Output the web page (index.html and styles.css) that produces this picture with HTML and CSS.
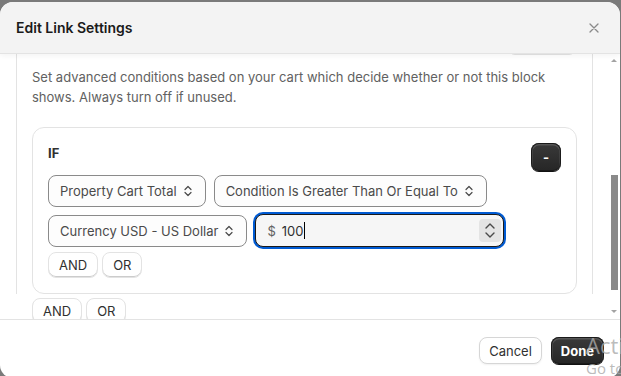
FILE: index.html
```html
<!DOCTYPE html>
<html lang="en">
<head>
  <meta charset="UTF-8">
  <title>Edit Link Settings</title>
  <link rel="stylesheet" href="styles.css">
</head>
<body>
  <div class="modal">
    <div class="modal-header">
      <h2>Edit Link Settings</h2>
      <button class="close-btn" aria-label="Close">
        <svg width="10" height="10" viewBox="0 0 10 10"><path d="M1 1l8 8M9 1l-8 8" stroke="#8a8a8a" stroke-width="1.3" stroke-linecap="round"/></svg>
      </button>
    </div>

    <div class="modal-body">
      <div class="scroll-area">
        <div class="section">
          <div class="toggle-row"><button class="btn toggle-btn"></button></div>
          <p class="help">Set advanced conditions based on your cart which decide whether or not this block shows. Always turn off if unused.</p>

          <div class="rule-card">
            <div class="rule-head">
              <span class="rule-title">IF</span>
              <button class="btn-dark remove-btn">-</button>
            </div>
            <div class="rule-row">
              <div class="select">Property Cart Total
                <svg width="8" height="12" viewBox="0 0 8 12"><path d="M1 4.5l3-3 3 3M1 7.5l3 3 3-3" fill="none" stroke="#4a4a4a" stroke-width="1.2" stroke-linecap="round" stroke-linejoin="round"/></svg>
              </div>
              <div class="select">Condition Is Greater Than Or Equal To
                <svg width="8" height="12" viewBox="0 0 8 12"><path d="M1 4.5l3-3 3 3M1 7.5l3 3 3-3" fill="none" stroke="#4a4a4a" stroke-width="1.2" stroke-linecap="round" stroke-linejoin="round"/></svg>
              </div>
            </div>
            <div class="rule-row">
              <div class="select">Currency USD - US Dollar
                <svg width="8" height="12" viewBox="0 0 8 12"><path d="M1 4.5l3-3 3 3M1 7.5l3 3 3-3" fill="none" stroke="#4a4a4a" stroke-width="1.2" stroke-linecap="round" stroke-linejoin="round"/></svg>
              </div>
              <div class="amount-input">
                <span class="prefix">$</span>
                <span class="value">100</span><span class="caret"></span>
                <span class="spin">
                  <svg width="12" height="8" viewBox="0 0 12 8"><path d="M2 6l4-4 4 4" fill="none" stroke="#4a4a4a" stroke-width="1.4" stroke-linecap="round" stroke-linejoin="round"/></svg>
                  <svg width="12" height="8" viewBox="0 0 12 8"><path d="M2 2l4 4 4-4" fill="none" stroke="#4a4a4a" stroke-width="1.4" stroke-linecap="round" stroke-linejoin="round"/></svg>
                </span>
              </div>
            </div>
            <div class="logic-row">
              <button class="btn">AND</button>
              <button class="btn">OR</button>
            </div>
          </div>

          <div class="logic-row outer">
            <button class="btn">AND</button>
            <button class="btn">OR</button>
          </div>
        </div>
      </div>
      <div class="scrollbar">
        <span class="arrow-up"></span>
        <span class="thumb"></span>
        <span class="arrow-down"></span>
      </div>
    </div>

    <div class="modal-footer">
      <button class="btn">Cancel</button>
      <button class="btn-dark done-btn">Done</button>
    </div>
  </div>

  <div class="watermark">
    <div class="wm-title">Activate Windows</div>
    <div class="wm-sub">Go to Settings to activate Windows.</div>
  </div>
</body>
</html>
```

FILE: styles.css
```css
html, body {
  margin: 0;
  height: 376px;
  overflow: hidden;
}
body {
  background: #7a7a7a;
  font-family: Inter, "Noto Sans", sans-serif;
  font-size: 13px;
  color: #303030;
}
button {
  font-family: inherit;
}
.modal {
  margin-top: 2px;
  width: 620px;
  height: 376px;
  background: #fff;
  border-radius: 13px;
  overflow: hidden;
  display: flex;
  flex-direction: column;
}
.modal-header {
  height: 51px;
  flex: none;
  background: #f3f3f3;
  border-bottom: 1px solid #e3e3e3;
  padding: 0 16px;
  display: flex;
  align-items: center;
  justify-content: space-between;
  box-shadow: 0 2px 6px rgba(0, 0, 0, 0.05);
  position: relative;
  z-index: 1;
}
.modal-header h2 {
  margin: 0;
  font-size: 14px;
  font-weight: 600;
  color: #1a1a1a;
}
.close-btn {
  width: 20px;
  height: 20px;
  padding: 0;
  border: 0;
  background: none;
  display: flex;
  align-items: center;
  justify-content: center;
}
.modal-body {
  flex: 1;
  display: flex;
  overflow: hidden;
}
.scroll-area {
  flex: 1;
  padding-left: 16px;
  overflow: hidden;
}
.section {
  height: 100%;
  border-left: 1px solid #e3e3e3;
  border-right: 1px solid #e3e3e3;
  padding: 0 15px;
}
.toggle-row {
  display: flex;
  justify-content: flex-end;
  margin-top: -25px;
}
.toggle-btn {
  width: 70px;
  height: 29px;
  border-color: #d4d4d4;
}
.help {
  margin: 12px 0 0;
  line-height: 20px;
  color: #616161;
}
.rule-card {
  margin-top: 20px;
  border: 1px solid #e3e3e3;
  border-radius: 12px;
  padding: 15px;
}
.rule-head {
  display: flex;
  justify-content: space-between;
  align-items: flex-start;
}
.rule-title {
  font-weight: 700;
  line-height: 20px;
}
.rule-row {
  display: flex;
  gap: 8px;
  margin-top: 8px;
}
.rule-head + .rule-row {
  margin-top: 4px;
}
.select {
  height: 32px;
  box-sizing: border-box;
  border: 1px solid #8a8a8a;
  border-radius: 8px;
  background: #fdfdfd;
  padding: 0 13px 0 11px;
  display: flex;
  align-items: center;
  gap: 7px;
  color: #4a4a4a;
}
.amount-input {
  width: 249px;
  height: 33px;
  margin-top: -1px;
  box-sizing: border-box;
  border: 1px solid #1a1a1a;
  border-radius: 8px;
  background: #f6f6f6;
  box-shadow: 0 0 0 2px #005bd3;
  padding: 0 2px 0 11px;
  display: flex;
  align-items: center;
}
.prefix {
  color: #616161;
  margin-right: 6px;
}
.caret {
  width: 1px;
  height: 17px;
  background: #000;
  margin-left: 1px;
}
.spin {
  margin-left: auto;
  width: 22px;
  height: 23px;
  border-radius: 4px;
  background: #e4e4e4;
  display: flex;
  flex-direction: column;
  align-items: center;
  justify-content: center;
  gap: 1px;
}
.logic-row {
  display: flex;
  gap: 4px;
  margin-top: 5px;
}
.logic-row.outer {
  margin-top: 4px;
}
.btn {
  height: 26px;
  padding: 0 10px;
  background: #fff;
  color: #303030;
  font-size: 13px;
  font-weight: 400;
  border: 1px solid #e3e3e3;
  border-radius: 8px;
  box-shadow: inset 0 -1px 0 #cccccc;
}
.btn-dark {
  background: linear-gradient(#3a3a3a, #262626);
  color: #fff;
  border: 0;
  border-radius: 8px;
  font-weight: 700;
  font-size: 13px;
  box-shadow: inset 0 0 0 1px #1a1a1a, inset 0 1px 0 1.5px rgba(255, 255, 255, 0.15), 0 1px 0 #111;
}
.remove-btn {
  width: 30px;
  height: 28px;
  padding: 0;
}
.modal-footer {
  height: 59px;
  flex: none;
  border-top: 1px solid #e3e3e3;
  padding: 17px 16px 0;
  box-sizing: border-box;
  display: flex;
  justify-content: flex-end;
  align-items: flex-start;
  gap: 9px;
}
.modal-footer .btn {
  height: 27px;
  padding: 0 9px;
  border-color: #d6d6d6;
  box-shadow: 0 1px 2px rgba(0, 0, 0, 0.06);
}
.done-btn {
  height: 27px;
  padding: 0 10px;
}
.scrollbar {
  width: 27px;
  flex: none;
  display: flex;
  flex-direction: column;
  align-items: flex-end;
  padding-right: 2px;
  box-sizing: border-box;
}
.arrow-up, .arrow-down {
  width: 0;
  height: 0;
  border-left: 3px solid transparent;
  border-right: 3px solid transparent;
  margin-right: 1px;
}
.arrow-up {
  margin-top: 5px;
  border-bottom: 3px solid #a3a3a3;
}
.arrow-down {
  margin-top: auto;
  margin-bottom: 6px;
  border-top: 3px solid #a3a3a3;
}
.thumb {
  width: 7px;
  height: 115px;
  margin-top: 113px;
  background: #8a8a8a;
}
.watermark {
  position: absolute;
  left: 586px;
  top: 332px;
  color: rgba(170, 170, 170, 0.8);
  font-family: "Segoe UI", "Open Sans", sans-serif;
  white-space: nowrap;
  pointer-events: none;
}
.wm-title {
  font-size: 22px;
  line-height: 26px;
}
.wm-sub {
  font-size: 15px;
  line-height: 20px;
}
```
